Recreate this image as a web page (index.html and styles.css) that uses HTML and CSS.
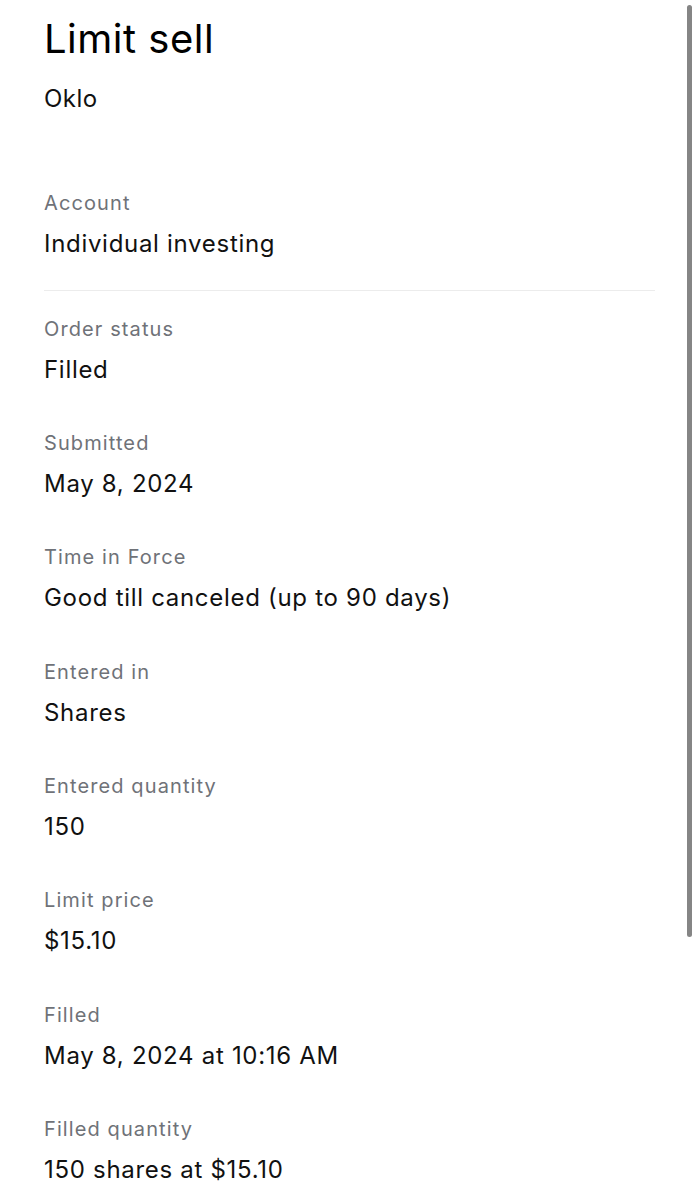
FILE: index.html
```html
<!DOCTYPE html>
<html>

<head>
  <link rel="stylesheet" href="styles.css">
</head>

<body>

  <div class="page">
    <h1 class="title">Limit sell</h1>
    <p class="symbol">Oklo</p>

    <!-- account block, separated from the order details -->
    <div class="field first">
      <p class="label">Account</p>
      <p class="value">Individual investing</p>
    </div>
    <div class="divider"></div>

    <div class="field">
      <p class="label">Order status</p>
      <p class="value">Filled</p>
    </div>
    <div class="field">
      <p class="label">Submitted</p>
      <p class="value">May 8, 2024</p>
    </div>
    <div class="field">
      <p class="label">Time in Force</p>
      <p class="value">Good till canceled (up to 90 days)</p>
    </div>
    <div class="field">
      <p class="label">Entered in</p>
      <p class="value">Shares</p>
    </div>
    <div class="field">
      <p class="label">Entered quantity</p>
      <p class="value">150</p>
    </div>
    <div class="field">
      <p class="label">Limit price</p>
      <p class="value">$15.10</p>
    </div>
    <div class="field">
      <p class="label">Filled</p>
      <p class="value">May 8, 2024 at 10:16 AM</p>
    </div>
    <div class="field">
      <p class="label">Filled quantity</p>
      <p class="value">150 shares at $15.10</p>
    </div>
  </div>

  <div class="scrollbar"></div>

</body>

</html>
```

FILE: styles.css
```css
body {
  margin: 0;
  background-color: #ffffff;
  font-family: Inter, "Noto Sans", sans-serif;
  color: #111111;
}

.page {
  padding: 14.5px 42px 0 44px;
}

p {
  margin: 0;
}

.title {
  margin: 0;
  font-size: 40px;
  line-height: 48px;
  font-weight: 400;
  letter-spacing: 0.5px;
  color: #000000;
}

.symbol {
  margin-top: 20px;
  font-size: 24px;
  line-height: 32px;
  letter-spacing: 0.5px;
}

.field {
  margin-bottom: 43.3px;
}

.field.first {
  margin-top: 74.4px;
  margin-bottom: 30px;
}

.label {
  font-size: 20px;
  line-height: 28px;
  letter-spacing: 1.1px;
  color: #6f7278;
}

.value {
  margin-top: 11px;
  font-size: 24px;
  line-height: 32px;
  letter-spacing: 0.7px;
}

.divider {
  height: 1px;
  background-color: #ececec;
  margin-bottom: 24px;
}

.scrollbar {
  position: absolute;
  top: 5px;
  left: 687px;
  width: 5px;
  height: 932px;
  border-radius: 3px;
  background-color: #858585;
}
```
